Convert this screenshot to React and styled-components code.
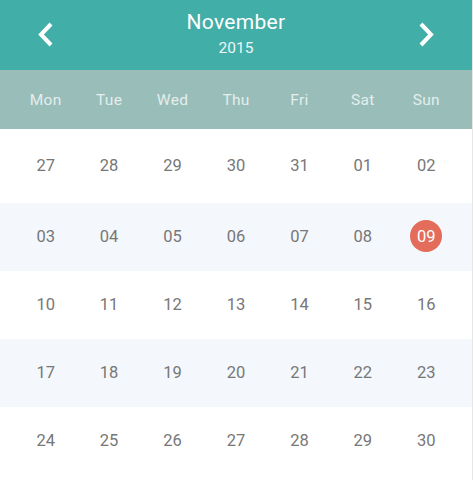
import React from 'react';
import styled, { createGlobalStyle } from 'styled-components';

const GlobalStyle = createGlobalStyle`
  html, body {
    margin: 0;
    padding: 0;
    background: #ffffff;
  }
  body {
    font-family: Roboto, "Liberation Sans", sans-serif;
  }
`;

const Calendar = styled.div`
  width: 473px;
  height: 480px;
  overflow: hidden;
  background: #ffffff;
  border-right: 1px solid #e6e6e6;
  box-sizing: border-box;
`;

const Header = styled.div`
  height: 70px;
  background: #42aea8;
  color: #ffffff;
  display: flex;
  align-items: center;
  justify-content: space-between;
  padding: 0 37px 0 37px;
  box-sizing: border-box;
`;

const NavButton = styled.button`
  border: 0;
  background: none;
  padding: 0;
  width: 17px;
  height: 24px;
  display: flex;
  align-items: center;
  justify-content: center;
  cursor: pointer;
  margin-top: -1px;
`;

const Title = styled.div`
  display: flex;
  flex-direction: column;
  align-items: center;
  margin-top: -2px;
`;

const Month = styled.div`
  font-size: 21px;
  line-height: 24px;
  letter-spacing: 0.3px;
`;

const Year = styled.div`
  font-size: 15.5px;
  line-height: 20px;
  margin-top: 4px;
  color: #eef7f6;
`;

const WeekBar = styled.div`
  height: 59px;
  background: #99bdb9;
  display: grid;
  grid-template-columns: repeat(7, 1fr);
  align-items: center;
  padding: 0 14px;
`;

const WeekDay = styled.div`
  text-align: center;
  font-size: 15.5px;
  color: #e4eeec;
  letter-spacing: 0.3px;
  margin-top: 1px;
`;

const Row = styled.div`
  height: ${({ $h }) => $h}px;
  background: ${({ $alt }) => ($alt ? '#f4f8fc' : '#ffffff')};
  display: grid;
  grid-template-columns: repeat(7, 1fr);
  align-items: center;
  padding: 0 14px;
`;

const Cell = styled.div`
  display: flex;
  justify-content: center;
  align-items: center;
  margin-top: -2px;
`;

const Day = styled.span`
  width: 32px;
  height: 32px;
  border-radius: 50%;
  display: flex;
  align-items: center;
  justify-content: center;
  font-size: 16.5px;
  color: ${({ $active }) => ($active ? '#ffffff' : '#777777')};
  background: ${({ $active }) => ($active ? '#e36c5a' : 'transparent')};
`;

const Chevron = ({ dir }) => (
  <svg width="17" height="25" viewBox="0 0 17 25">
    <polyline
      points={dir === 'left' ? '14,2 4,12.5 14,23' : '3,2 13,12.5 3,23'}
      fill="none"
      stroke="#ffffff"
      strokeWidth="4"
    />
  </svg>
);

const weekDays = ['Mon', 'Tue', 'Wed', 'Thu', 'Fri', 'Sat', 'Sun'];

const weeks = [
  ['27', '28', '29', '30', '31', '01', '02'],
  ['03', '04', '05', '06', '07', '08', '09'],
  ['10', '11', '12', '13', '14', '15', '16'],
  ['17', '18', '19', '20', '21', '22', '23'],
  ['24', '25', '26', '27', '28', '29', '30'],
];

const rowHeights = [74, 68, 68, 68, 68];

export default function App() {
  return (
    <>
      <GlobalStyle />
      <Calendar>
        <Header>
          <NavButton aria-label="previous month">
            <Chevron dir="left" />
          </NavButton>
          <Title>
            <Month>November</Month>
            <Year>2015</Year>
          </Title>
          <NavButton aria-label="next month">
            <Chevron dir="right" />
          </NavButton>
        </Header>
        <WeekBar>
          {weekDays.map(d => (
            <WeekDay key={d}>{d}</WeekDay>
          ))}
        </WeekBar>
        {weeks.map((week, i) => (
          <Row key={i} $h={rowHeights[i]} $alt={i % 2 === 1}>
            {week.map((d, j) => (
              <Cell key={j}>
                <Day $active={i === 1 && j === 6}>{d}</Day>
              </Cell>
            ))}
          </Row>
        ))}
      </Calendar>
    </>
  );
}
